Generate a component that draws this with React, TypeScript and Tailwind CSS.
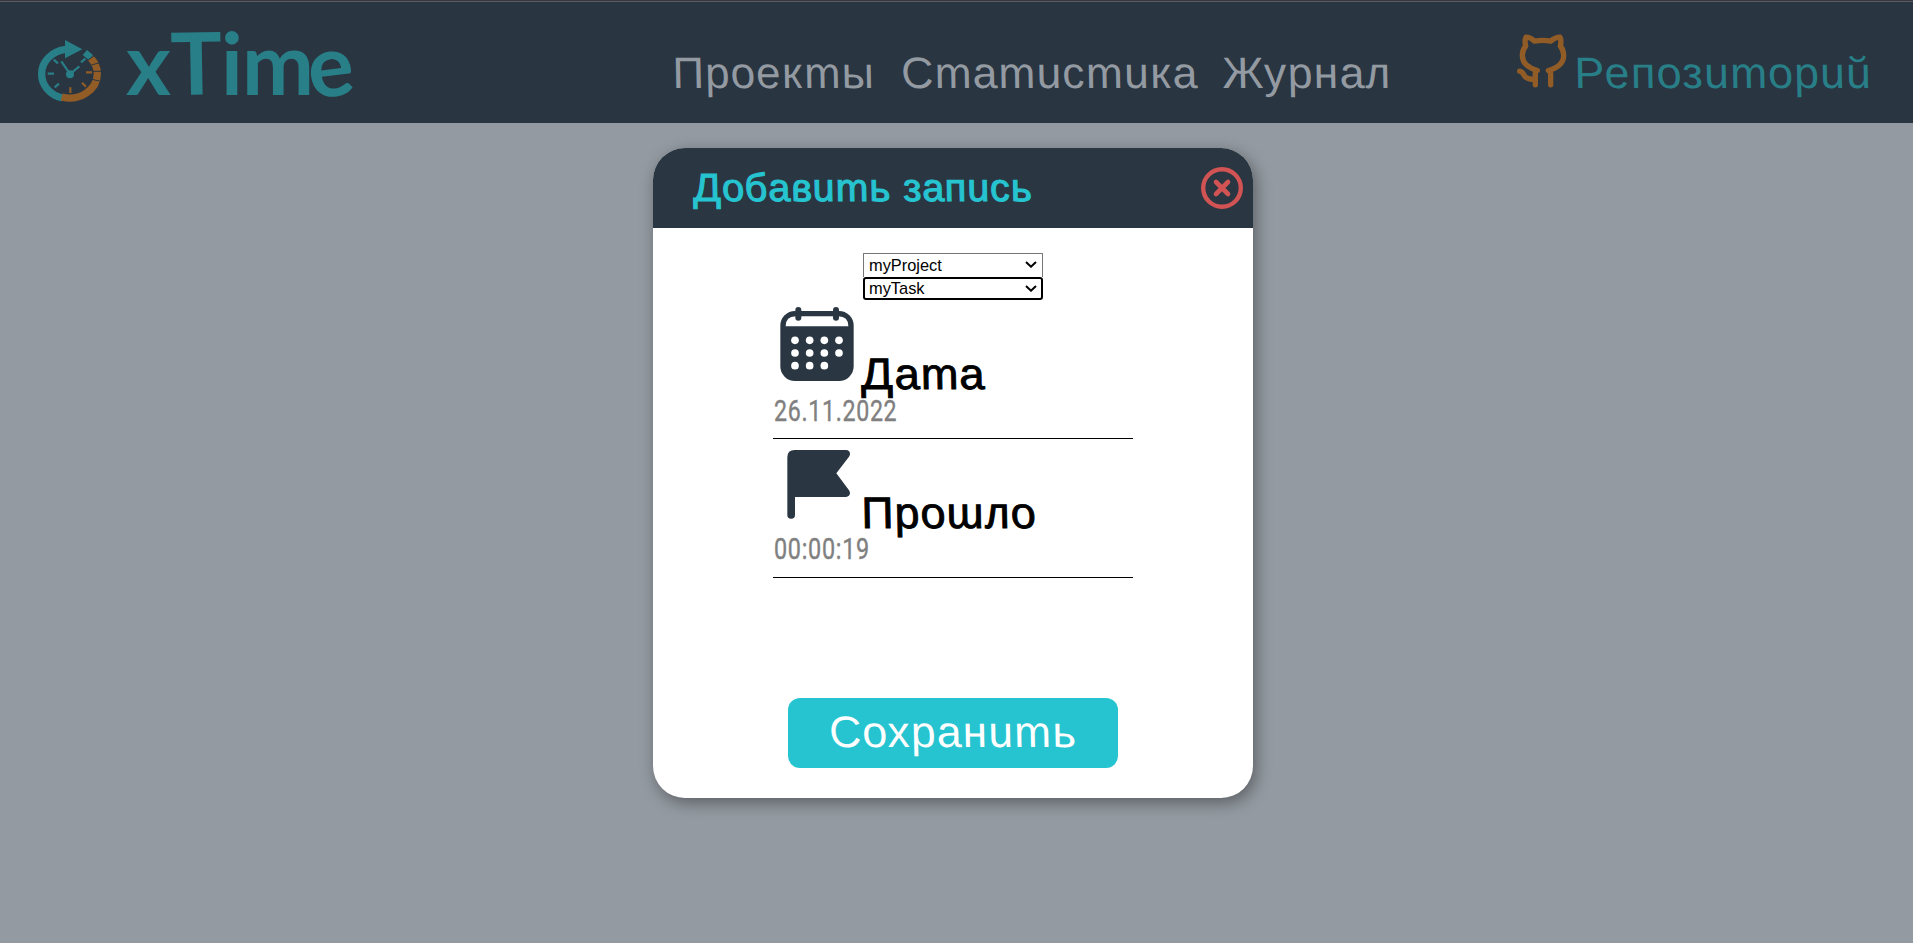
import { useLayoutEffect, useRef, useState } from "react";

const clsx = (...parts: string[]) => parts.join(" ");

/** Upright cursive lettering, stretched to fill the width of its box. */
function Lettering({ text, className, upright = false }: { text: string; className: string; upright?: boolean }) {
  const box = useRef<HTMLSpanElement>(null);
  const ink = useRef<HTMLSpanElement>(null);
  const [ratio, setRatio] = useState(1);
  useLayoutEffect(() => {
    setRatio(box.current!.offsetWidth / ink.current!.offsetWidth);
  }, [text]);
  const skew = upright ? "" : " skewX(12deg)";
  return (
    <span ref={box} className={clsx("block shrink-0 whitespace-nowrap", className)}>
      <span
        ref={ink}
        className={clsx("inline-block align-top", upright ? "origin-left tracking-[0.03em]" : "origin-[0_81%] italic tracking-[0.03em]")}
        style={{ transform: `scaleX(${ratio})${skew}` }}
      >
        {text}
      </span>
    </span>
  );
}

function Logo() {
  return (
    <svg className="block h-[123px] w-[400px] shrink-0" viewBox="0 0 400 123" fill="none">
      <g transform="scale(.33333)">
        <path d="M187 294A83.5 73.5 0 0 1 125 221.5A83.5 73.5 0 0 1 198 148" stroke="#287f88" strokeWidth="22" />
        <path d="M185 291A83.5 73.5 0 0 0 292 221.5A83.5 73.5 0 0 0 272 174" stroke="#925c27" strokeWidth="22" />
        <path d="M195 120l52 28-52 27zM248 165l13-15 18 15-13 15z" fill="#287f88" />
        <path d="M263 181l20-14M274 195l26-7M278 214h27M276 238l26 6" stroke="#293541" strokeWidth="3" />
        <path d="M143 221h19M161 179l13 11M243 187l13-11M164 262l13-11M210 222l-26-38M210 222l28-23" stroke="#287f88" strokeWidth="6.5" />
        <path d="M258 217h18M246 248l12 12M211 262v17" stroke="#925c27" strokeWidth="6.5" />
        <circle cx="210" cy="223" r="12" fill="#287f88" />
      </g>
      <text
        x="126 171 221 242 311"
        y="94.5 95 94.5 94.5 99"
        rotate="0 -1 0 0 -7"
        fill="#287f88"
        className="font-['Lato',sans-serif] text-[86px] font-bold"
      >
        xTime
      </text>
    </svg>
  );
}

function OctocatIcon() {
  return (
    <svg className="mt-[32px] block h-[57px] w-[60px] shrink-0" viewBox="60 95 180 170" fill="none" stroke="#925c27" strokeWidth="16" strokeLinecap="round" strokeLinejoin="round">
      <path d="M127 253V218Q127 212 133 210Q88 197 88 165Q88 148 98 137Q94 120 99 110Q112 110 125 122Q150 117 173 122Q187 110 201 110Q206 120 202 137Q212 148 212 165Q212 197 166 210Q173 213 173 220V253" />
      <path d="M80 212Q88 213 93 224Q99 237 127 237" />
    </svg>
  );
}

function CloseIcon() {
  return (
    <svg className="mr-[9px] block size-[44px]" viewBox="-22 -22 44 44" fill="none" stroke="#d15353" strokeWidth="4.4" strokeLinecap="round">
      <circle r="18.8" />
      <path d="M-6-6L6 6M6-6L-6 6" strokeWidth="4.6" />
    </svg>
  );
}

function CalendarIcon() {
  const dots = [
    [105, 136], [149, 136], [193, 136], [237, 136],
    [105, 174], [149, 174], [193, 174], [237, 174],
    [105, 212], [149, 212], [193, 212],
  ];
  return (
    <svg className="block size-[88px] shrink-0" viewBox="39 15 264 264">
      <rect x="61" y="48" width="220" height="210" rx="44" fill="#2a3742" />
      <path d="M77 94Q77 64 107 64H235Q265 64 265 94Z" fill="#fff" />
      <rect x="106" y="36" width="18" height="41" rx="9" fill="#2a3742" />
      <rect x="219" y="36" width="18" height="41" rx="9" fill="#2a3742" />
      {dots.map(([x, y]) => (
        <circle key={`${x}-${y}`} cx={x} cy={y} r="11.5" fill="#fff" />
      ))}
    </svg>
  );
}

function FlagIcon() {
  return (
    <svg className="block size-[88px] shrink-0" viewBox="39 -3 264 264">
      <path d="M82 52Q82 30 104 30H258Q270 31 270 42Q270 46 267 50L229 100L267 151Q270 155 270 160Q269 170 258 171H105V225a11.5 11.5 0 0 1-23 0Z" fill="#2a3742" />
    </svg>
  );
}

function Select({ value, className }: { value: string; className: string }) {
  return (
    <div className={clsx("flex w-[180px] items-center justify-between bg-white font-['Liberation_Sans',Arial,sans-serif] text-[16.4px] leading-[20px] text-black", className)}>
      <span>{value}</span>
      <svg className="block h-[7px] w-[12px]" viewBox="0 0 12 7" fill="none" stroke="#000" strokeWidth="2">
        <path d="M1 1L6 5.7L11 1" />
      </svg>
    </div>
  );
}

export default function App() {
  return (
    <div className="h-[943px] w-[1913px] overflow-hidden bg-[#939aa1] font-['Liberation_Sans',Arial,sans-serif]">
      <header className="flex h-[123px] items-start border-t border-[#38373e] bg-[#293541] shadow-[inset_0_1px_0_#5b5c65]">
        <div className="-mt-px flex">
          <Logo />
          <nav className="ml-[275px] mt-[48px] flex text-[44px] leading-[50px] text-[#939aa1]">
            <Lettering text="Проекты" className="w-[203px]" />
            <Lettering text="Статистика" className="ml-[26px] w-[297px]" />
            <Lettering text="Журнал" className="ml-[24px] w-[169px]" />
          </nav>
          <a className="ml-[119px] flex text-[44px] leading-[50px] text-[#287f88]">
            <OctocatIcon />
            <Lettering text="Репозиторий" className="ml-[4px] mt-[48px] w-[298px]" />
          </a>
        </div>
      </header>

      <main className="ml-[653px] mt-[25px] flex h-[650px] w-[600px] flex-col items-center overflow-hidden rounded-[32px] bg-white shadow-[3px_5px_16px_rgba(0,0,0,0.38)]">
        <div className="flex h-[80px] w-full shrink-0 items-center justify-between bg-[#2a3742] pl-[43px]">
          <Lettering text="Добавить запись" className="w-[339px] text-[39px] leading-[46px] text-[#26c4d0] [-webkit-text-stroke:1.1px_#26c4d0]" />
          <CloseIcon />
        </div>

        <div className="mt-[25px] flex flex-col">
          <Select value="myProject" className="h-[24px] rounded-t-[1px] border border-b-0 border-[#767676] pb-[2px] pl-[5px] pr-[5px]" />
          <Select value="myTask" className="h-[23px] rounded-[3px] border-2 border-black pb-[1px] pl-[4px] pr-[4px]" />
        </div>

        <div className="flex h-[139px] w-[360px] shrink-0 flex-col border-b border-black">
          <div className="flex h-[95px]">
            <CalendarIcon />
            <Lettering text="Дата" className="ml-[3px] mt-[49px] w-[124px] text-[44px] leading-[50px] text-black [-webkit-text-stroke:0.9px_black]" />
          </div>
          <Lettering upright text="26.11.2022" className="ml-px w-[123px] font-['Roboto',sans-serif] text-[29px] leading-[32px] text-[#808080] [-webkit-text-stroke:0.4px_#808080]" />
        </div>
        <div className="flex h-[139px] w-[360px] shrink-0 flex-col border-b border-black">
          <div className="flex h-[94px]">
            <FlagIcon />
            <Lettering text="Прошло" className="ml-[3px] mt-[49px] w-[176px] text-[44px] leading-[50px] text-black [-webkit-text-stroke:0.9px_black]" />
          </div>
          <Lettering upright text="00:00:19" className="ml-px w-[96px] font-['Roboto',sans-serif] text-[29px] leading-[32px] text-[#808080] [-webkit-text-stroke:0.4px_#808080]" />
        </div>

        <button className="mb-[30px] mt-auto flex h-[70px] w-[330px] shrink-0 items-start justify-center rounded-[12px] bg-[#26c4d0] pt-[9px] text-[44px] leading-[50px] text-white">
          <Lettering text="Сохранить" className="ml-[5px] w-[248px]" />
        </button>
      </main>
    </div>
  );
}
